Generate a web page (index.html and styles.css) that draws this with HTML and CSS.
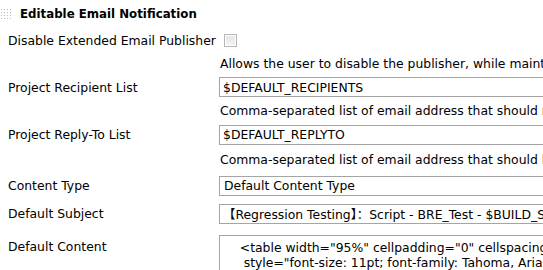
FILE: index.html
```html
<!DOCTYPE html>
<html lang="en">
<head>
    <meta charset="UTF-8" />
    <title>Editable Email Notification</title>
    <link rel="stylesheet" href="styles.css">
</head>
<body>
    <div class="section">
        <div class="section-header">
            <span class="grip"></span>
            <span class="section-title">Editable Email Notification</span>
        </div>

        <div class="row">
            <label class="label">Disable Extended Email Publisher <input type="checkbox" class="check" /></label>
        </div>
        <div class="row row-desc">
            <div class="label"></div>
            <div class="desc">Allows the user to disable the publisher, while maintaining the settings</div>
        </div>

        <div class="row">
            <div class="label">Project Recipient List</div>
            <div class="field"><input type="text" class="text" value="$DEFAULT_RECIPIENTS" /></div>
        </div>
        <div class="row row-desc">
            <div class="label"></div>
            <div class="desc">Comma-separated list of email address that should receive notifications for this project.</div>
        </div>

        <div class="row row-wide">
            <div class="label">Project Reply-To List</div>
            <div class="field"><input type="text" class="text" value="$DEFAULT_REPLYTO" /></div>
        </div>
        <div class="row row-desc row-wide">
            <div class="label"></div>
            <div class="desc">Comma-separated list of email address that should be in the Reply-To header for this project.</div>
        </div>

        <div class="row row-wider">
            <div class="label">Content Type</div>
            <div class="field">
                <select class="select">
                    <option>Default Content Type</option>
                </select>
            </div>
        </div>

        <div class="row row-widest">
            <div class="label">Default Subject</div>
            <div class="field"><input type="text" class="text" value="【Regression Testing】：Script - BRE_Test - $BUILD_STATUS" /></div>
        </div>

        <div class="row row-top">
            <div class="label">Default Content</div>
            <div class="field">
                <textarea class="area" rows="4">    <table width="95%" cellpadding="0" cellspacing="0"
     style="font-size: 11pt; font-family: Tahoma, Arial, Helvetica, sans-serif"></textarea>
            </div>
        </div>
    </div>
</body>
</html>
```

FILE: styles.css
```css
html {
    overflow: hidden;
}
body {
    margin: 0;
    width: 760px;
    background: #fff;
    color: #000;
    font-family: "DejaVu Sans", Verdana, "Noto Sans CJK SC", sans-serif;
    font-size: 12.4px;
}
.section-header {
    display: flex;
    align-items: center;
    height: 28px;
}
.grip {
    width: 12px;
    height: 12px;
    margin: 0 8px 0 0;
    background-image: radial-gradient(circle, #bbb 0.8px, transparent 1px);
    background-size: 3px 3px;
}
.section-title {
    font-weight: bold;
    font-size: 11.8px;
}
.row {
    display: flex;
    align-items: center;
    height: 24px;
}
.row-desc {
    height: 23px;
}
.row-wide {
    height: 25px;
}
.row-wider {
    height: 27px;
}
.row-widest {
    height: 29px;
}
.row-top {
    height: auto;
    align-items: flex-start;
    padding-top: 7px;
}
.row-top .label {
    padding-top: 4px;
}
.label {
    flex: 0 0 211px;
    padding-left: 8px;
    display: flex;
    align-items: center;
    white-space: nowrap;
}
.check {
    appearance: none;
    width: 13px;
    height: 13px;
    margin: 1px 0 0 8px;
    border: 1px solid #b5b5b5;
    background: linear-gradient(#e4e4e4, #f4f4f4);
    box-shadow: inset 0 0 0 1px #fff;
}
.desc {
    white-space: nowrap;
    padding-left: 1px;
}
.field {
    flex: 1;
}
.text, .select {
    box-sizing: border-box;
    width: 100%;
    height: 20px;
    border: 1px solid #a5a5a5;
    font-family: inherit;
    font-size: 12.4px;
    padding: 0 3px;
    margin: 0;
    background: #fff;
    color: #000;
}
.select {
    appearance: none;
    padding: 0 4px;
}
.area {
    box-sizing: border-box;
    width: 100%;
    height: 60px;
    border: 1px solid #a5a5a5;
    font-family: inherit;
    font-size: 12.4px;
    line-height: 15px;
    padding: 4px 4px;
    margin: 0;
    resize: none;
}
```
